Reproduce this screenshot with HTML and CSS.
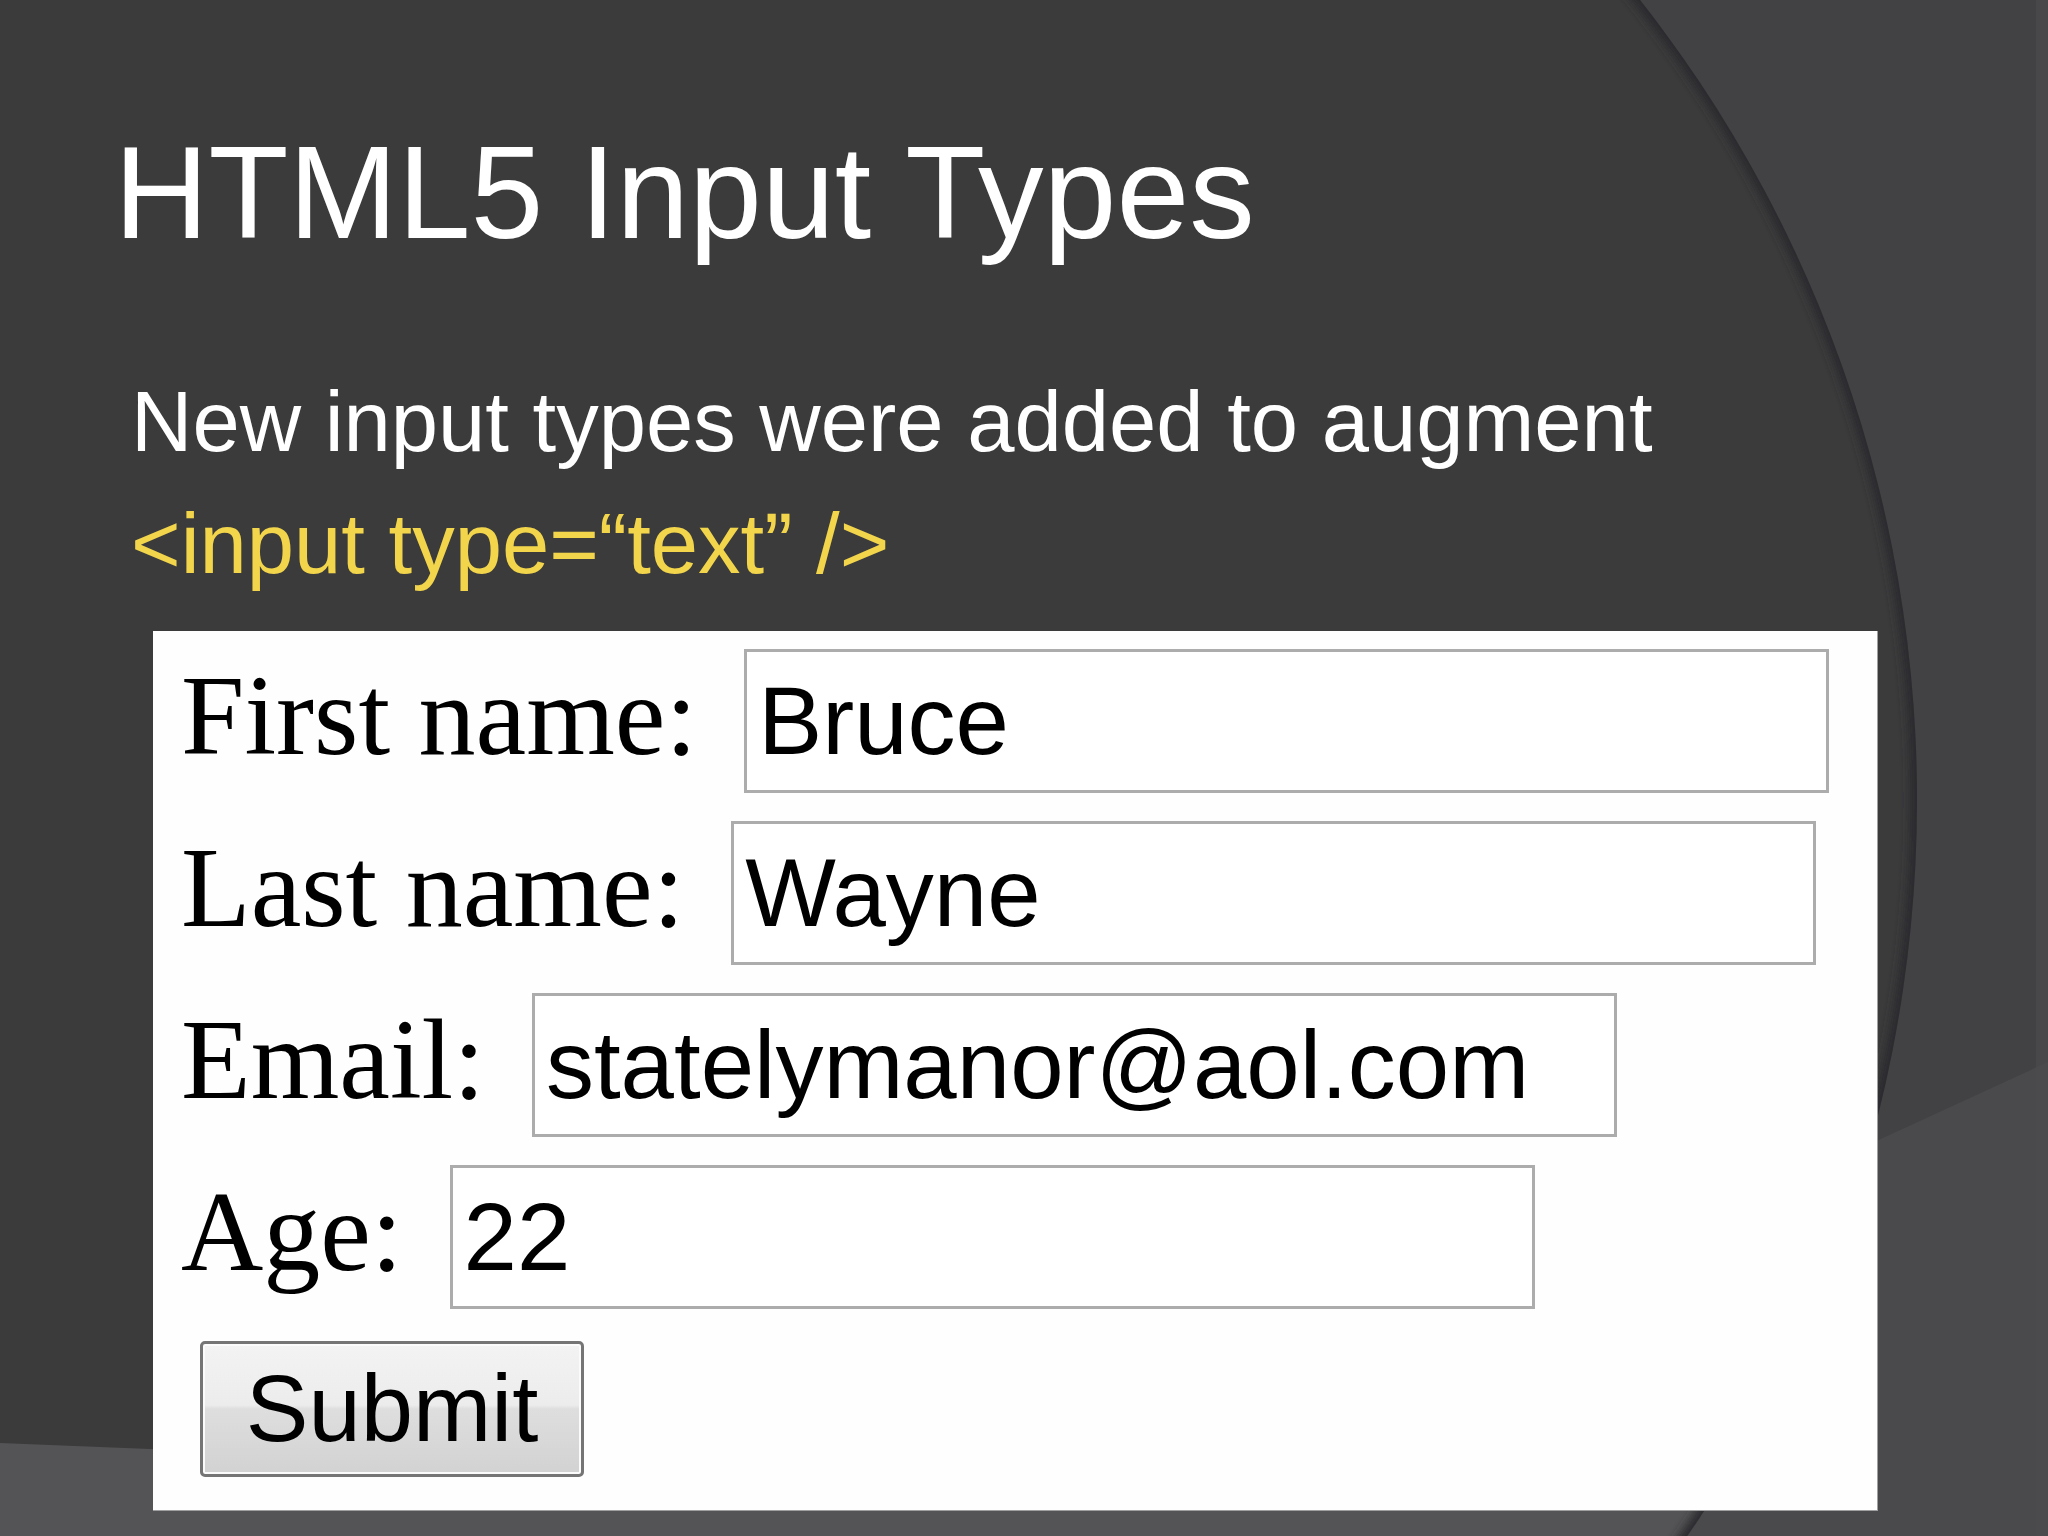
FILE: index.html
```html
<!DOCTYPE html>
<html>
<head>
    <meta charset="UTF-8">
    <title>HTML5 Input Types</title>
    <link rel="stylesheet" href="styles.css">
</head>
<body>
    <!-- slide backdrop: dark field with the big arc on the right -->
    <svg class="backdrop" width="2048" height="1536" viewBox="0 0 2048 1536" aria-hidden="true">
        <defs>
            <clipPath id="inside-arc">
                <circle cx="623" cy="800" r="1294"/>
            </clipPath>
            <filter id="soft" x="-10%" y="-10%" width="120%" height="120%">
                <feGaussianBlur stdDeviation="5"/>
            </filter>
        </defs>
        <rect width="2048" height="1536" fill="#424244"/>
        <polygon points="1500,1314 2048,1062 2048,1536 1500,1536" fill="#4a494c"/>
        <rect x="2036" y="0" width="12" height="1536" fill="#4c4c4e" opacity="0.6"/>
        <g clip-path="url(#inside-arc)">
            <rect width="2048" height="1536" fill="#3b3b3c"/>
            <polygon points="0,1443 1800,1515 1800,1536 0,1536" fill="#545456"/>
            <circle cx="623" cy="800" r="1294" fill="none" stroke="#2c2c2d" stroke-width="14" filter="url(#soft)"/>
        </g>
    </svg>

    <div class="slide">
        <h1 class="title">HTML5 Input Types</h1>
        <p class="lead">New input types were added to augment<br>
            <span class="code">&lt;input type=“text” /&gt;</span></p>

        <!-- screenshot of the rendered form -->
        <form class="demo">
            <div class="field">
                <label for="fname">First name:</label>
                <input type="text" id="fname" class="box" value="Bruce">
            </div>
            <div class="field">
                <label for="lname">Last name:</label>
                <input type="text" id="lname" class="box" value="Wayne">
            </div>
            <div class="field">
                <label for="email">Email:</label>
                <input type="text" id="email" class="box" value="statelymanor@aol.com">
            </div>
            <div class="field">
                <label for="age">Age:</label>
                <input type="text" id="age" class="box" value="22">
            </div>
            <button type="button" class="submit">Submit</button>
        </form>
    </div>
</body>
</html>
```

FILE: styles.css
```css
/* --- slide layout --- */
html, body {
    margin: 0;
    padding: 0;
}

body {
    position: relative;
    width: 2048px;
    height: 1536px;
    overflow: hidden;
    background-color: #3b3b3c;
    font-family: "Liberation Sans", Arial, sans-serif;
}

.backdrop {
    position: absolute;
    top: 0;
    left: 0;
    z-index: 0;
}

.slide {
    position: relative;
    z-index: 1;
    padding: 127px 0 0 114px;
}

.title {
    margin: 0;
    color: #ffffff;
    font-size: 131px;
    font-weight: normal;
    line-height: 131px;
}

.lead {
    margin: 103px 0 0 17px;
    color: #ffffff;
    font-size: 85px;
    line-height: 122px;
}

.code {
    color: #f2d54b;
}

/* --- the white form panel --- */
.demo {
    box-sizing: border-box;
    width: 1725px;
    height: 880px;
    margin: 26px 0 0 39px;
    padding: 18px 0 0 28px;
    background-color: #fefefe;
    border-right: 1px solid #a0a0a0;
    border-bottom: 1px solid #a0a0a0;
    display: flex;
    flex-direction: column;
    align-items: flex-start;
    gap: 28px;
}

.field {
    display: flex;
    align-items: baseline;
    gap: 47px;
}

.field label {
    font-family: "Liberation Serif", "Times New Roman", serif;
    font-size: 114px;
    color: #000000;
}

.box {
    box-sizing: border-box;
    width: 1085px;
    height: 144px;
    margin: 0;
    padding: 0 11px;
    border: 3px solid #acacac;
    border-radius: 0;
    background-color: #ffffff;
    font-family: "Liberation Sans", Arial, sans-serif;
    font-size: 96px;
    color: #000000;
    outline: none;
}

.submit {
    box-sizing: border-box;
    width: 384px;
    height: 136px;
    margin: 4px 0 0 19px;
    padding: 0;
    border: 3px solid #757575;
    border-radius: 5px;
    box-shadow: inset 0 0 0 2px #fbfbfb;
    background: linear-gradient(#f3f3f3 0%, #ececec 47%, #dedede 50%, #d2d2d2 100%);
    font-family: "Liberation Sans", Arial, sans-serif;
    font-size: 94px;
    color: #000000;
    cursor: pointer;
}
```
